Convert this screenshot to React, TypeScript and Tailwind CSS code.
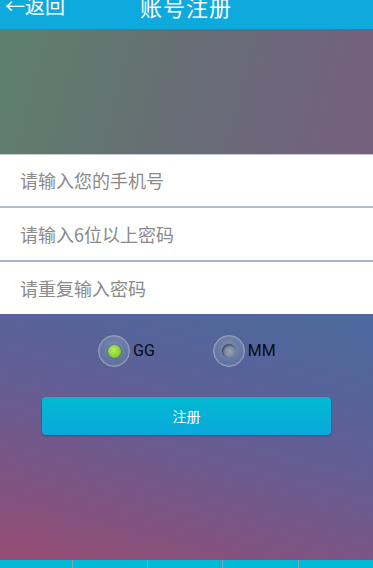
import React from "react";

const cjk = { fontFamily: '"Noto Sans CJK SC", "Noto Sans", sans-serif' };

function Radio({ checked, label }: { checked: boolean; label: string }) {
  return (
    <div className="flex items-center">
      <div className="w-[32px] h-[32px] rounded-full border border-[#9aa3b8] bg-[radial-gradient(circle_at_50%_40%,#7f8fb4_0%,#5d6f9e_70%,#52679a_100%)] shadow-[inset_0_0_2px_rgba(255,255,255,0.5)] flex items-center justify-center">
        {checked ? (
          <div className="w-[13px] h-[13px] rounded-full bg-[radial-gradient(circle_at_45%_40%,#b8f060_0%,#86d22a_60%,#5fa81a_100%)] shadow-[0_0_2px_rgba(40,60,20,0.6)]" />
        ) : (
          <div className="w-[14px] h-[14px] rounded-full bg-[radial-gradient(circle_at_55%_55%,#9aa2b6_0%,#6e7a98_70%,#4e5c80_100%)] shadow-[inset_1px_1px_2px_rgba(0,0,0,0.5)]" />
        )}
      </div>
      <span className="ml-[3px] text-[16px] text-[#0a0a14]" style={{ fontFamily: '"Roboto", "Noto Sans", sans-serif' }}>
        {label}
      </span>
    </div>
  );
}

export default function App() {
  return (
    <div className="w-[373px] h-[568px] overflow-hidden flex flex-col" style={cjk}>
      <div className="h-[29px] bg-[#0eaade] relative overflow-hidden flex shrink-0">
        <div className="absolute left-[5px] top-[-6px] text-white text-[20px] leading-[24px]">←返回</div>
        <div className="absolute left-[140px] top-[-7px] text-white text-[22px] leading-[26px] tracking-[1px]">账号注册</div>
      </div>
      <div className="h-[126px] shrink-0 bg-[linear-gradient(105deg,#5d806c_0%,#666f74_45%,#6e667c_75%,#75607e_100%)] border-b border-[#c7ccd0]" />
      <div className="bg-white shrink-0">
        <div className="h-[51px] flex items-center pl-[20px] text-[18px] text-[#8a8a8a]">请输入您的手机号</div>
        <div className="h-[2px] bg-[#b3bcc6]" />
        <div className="h-[52px] flex items-center pl-[20px] text-[18px] text-[#8a8a8a]">请输入6位以上密码</div>
        <div className="h-[2px] bg-[#a9b5c4]" />
        <div className="h-[52px] flex items-center pl-[20px] text-[18px] text-[#8a8a8a]">请重复输入密码</div>
      </div>
      <div className="flex-1 flex flex-col bg-[linear-gradient(195deg,#4b6a9e_0%,#56639a_25%,#675c92_50%,#82527f_78%,#9a4a70_100%)]">
        <div className="flex pl-[98px] pt-[21px] gap-[58px]">
          <Radio checked label="GG" />
          <Radio checked={false} label="MM" />
        </div>
        <div className="mx-[42px] mt-[30px] h-[38px] rounded-[4px] bg-[linear-gradient(to_bottom,#01bad0,#0aa9dd)] shadow-[0_1px_2px_rgba(0,0,0,0.3)] flex items-center justify-center text-white text-[14px]">
          注册
        </div>
        <div className="flex-1" />
        <div className="h-[8px] bg-[#00bad6] flex">
          <div className="w-[73px] border-r border-[#7aa8c0]" />
          <div className="w-[75px] border-r border-[#7aa8c0]" />
          <div className="w-[75px] border-r border-[#7aa8c0]" />
          <div className="w-[76px] border-r border-[#7aa8c0]" />
          <div className="flex-1" />
        </div>
      </div>
    </div>
  );
}
